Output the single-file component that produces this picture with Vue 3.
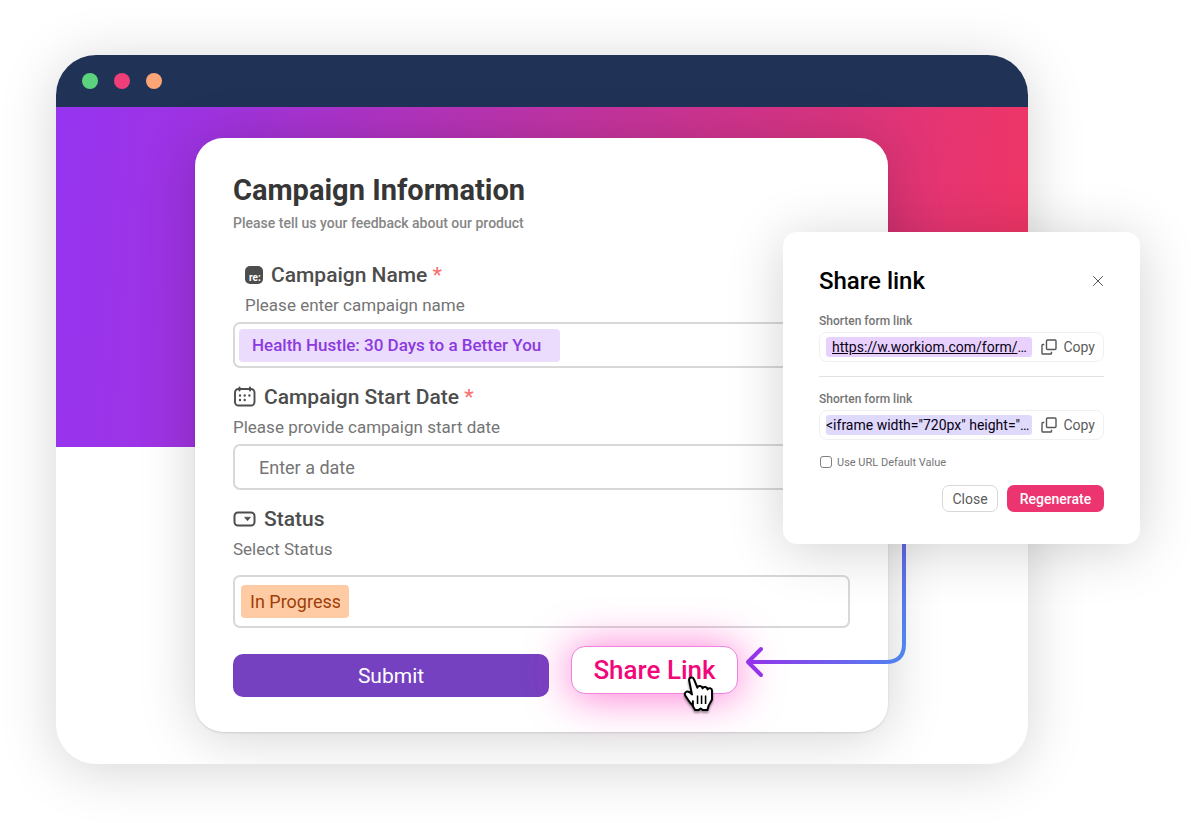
<script setup>
import { ref } from 'vue'

const campaign = ref('Health Hustle: 30 Days to a Better You')
const startDate = ref('')
const status = ref('In Progress')
const embed = ref('<iframe width="720px" height="…')
const useDefault = ref(false)
</script>

<template>
  <main class="stage">
    <section class="window">
      <header class="bar">
        <span class="dot green"></span>
        <span class="dot pink"></span>
        <span class="dot orange"></span>
      </header>
      <div class="canvas">
        <form class="card" @submit.prevent>
          <h1>Campaign Information</h1>
          <p class="intro">Please tell us your feedback about our product</p>

          <div class="field">
            <label class="label inset" for="name">
              <svg class="re-icon" width="18" height="18" viewBox="0 0 18 18" aria-hidden="true">
                <rect width="18" height="18" rx="5" fill="#4d4d4d" />
                <text x="4" y="15" fill="#fff" font-size="10" font-weight="700">re:</text>
              </svg>
              <span>Campaign Name <i>*</i></span>
            </label>
            <p class="hint inset">Please enter campaign name</p>
            <div class="box">
              <input id="name" v-model="campaign" class="chip violet" type="text" />
            </div>
          </div>

          <div class="field">
            <label class="label" for="date">
              <svg width="23" height="22" viewBox="0 0 23 22" fill="none" stroke="#4d4d4d" stroke-width="2" stroke-linecap="round" aria-hidden="true">
                <rect x="2" y="3" width="19.500" height="16.500" rx="3.500" stroke-width="1.900" />
                <path d="M6.500 1.500v3M17 1.500v3" />
                <path d="M7 9.500h.01M11.700 9.500h.01M16.400 9.500h.01M7 14h.01M11.700 14h.01" stroke-width="2.400" />
              </svg>
              <span>Campaign Start Date <i>*</i></span>
            </label>
            <p class="hint">Please provide campaign start date</p>
            <div class="box">
              <input id="date" v-model="startDate" class="plain" type="text" placeholder="Enter a date" />
            </div>
          </div>

          <div class="field">
            <label class="label" for="status">
              <svg width="23" height="16" viewBox="0 0 23 16" aria-hidden="true">
                <rect x="1.500" y="1.500" width="20" height="13" rx="3.500" fill="none" stroke="#4d4d4d" stroke-width="2" />
                <path d="M11.500 6.200h6l-3 3.600z" fill="#4d4d4d" stroke="#4d4d4d" stroke-width=".6" stroke-linejoin="round" />
              </svg>
              <span>Status</span>
            </label>
            <p class="hint">Select Status</p>
            <div class="box tall">
              <select id="status" v-model="status" class="chip peach">
                <option>In Progress</option>
              </select>
            </div>
          </div>

          <div class="actions">
            <button class="submit" type="submit">Submit</button>
            <button class="share" type="button">
              Share Link
              <svg class="hand" width="36" height="39" viewBox="1 0 32 35" aria-hidden="true">
                <path d="M11.500 23.500V28l2 3.500h3l2-1.500 2 1.500h4l1.200-4 3-5.500V14c0-2.300-3.200-3-4-1-.2-2.600-3.700-3-4.500-1-.4-2.500-3.900-2.800-4.700-.6L12.500 4c-.8-2.900-5-2-4.300 1.200L10.700 17.500c-1.200-1.600-2.800-3-4.700-2.600-2 .5-2.100 2.600-1 4.100 2 2.700 3 5.600 6.500 8.500z" fill="#fff" stroke="#000" stroke-width="1.800" stroke-linejoin="round" />
                <path d="M15.700 18.500v7.500M19.300 18.500v7.500M22.900 18.500v7.500" stroke="#000" stroke-width="1.400" fill="none" />
              </svg>
            </button>
          </div>
        </form>
      </div>
    </section>

    <aside class="overlay">
      <svg class="arrow" width="162" height="136" viewBox="0 0 162 136" fill="none" aria-hidden="true">
        <defs>
          <linearGradient id="flow" x1="0" y1="0" x2="1" y2="0">
            <stop offset="0" stop-color="#9333ea" />
            <stop offset="1" stop-color="#4f86f0" />
          </linearGradient>
          <linearGradient id="drop" x1="0" y1="0" x2="0" y2="1">
            <stop offset="0" stop-color="#6068e4" />
            <stop offset="1" stop-color="#4f86f0" />
          </linearGradient>
        </defs>
        <path d="M157 0H161V100Q161 120 141 120H4V116H141Q157 116 157 100V0Z" fill="url(#flow)" />
        <path d="M157 0h4v100h-4z" fill="url(#drop)" />
        <path d="M16 105L3 118L16 131" stroke="#9333ea" stroke-width="4" stroke-linecap="round" stroke-linejoin="round" />
      </svg>
      <section class="dialog" role="dialog" aria-labelledby="share-title">
        <div class="head">
          <h2 id="share-title">Share link</h2>
          <button class="x" type="button" aria-label="Close dialog">
            <svg width="12" height="12" viewBox="0 0 12 12" stroke="#555" stroke-width="1" stroke-linecap="round" aria-hidden="true">
              <path d="M1.500 1.500l9 9M10.500 1.500l-9 9" />
            </svg>
          </button>
        </div>

        <p class="tiny">Shorten form link</p>
        <div class="copy-row">
          <a class="token lilac" href="#form"><u>https://w.workiom.com/form/</u>…</a>
          <button class="copy" type="button">
            <svg width="16" height="16" viewBox="0 0 16 16" fill="none" stroke="#555" stroke-width="1.400" stroke-linejoin="round" aria-hidden="true">
              <rect x="5.500" y="1" width="9.500" height="9.500" rx="1" />
              <path d="M3.300 5.500H1.800q-.8 0-.8.800v7.900q0 .8.800.8h7.900q.8 0 .8-.8v-1.500" />
            </svg>
            Copy
          </button>
        </div>

        <hr />

        <label class="tiny" for="embed">Shorten form link</label>
        <div class="copy-row">
          <input id="embed" class="token blue" type="text" readonly :value="embed" />
          <button class="copy" type="button">
            <svg width="16" height="16" viewBox="0 0 16 16" fill="none" stroke="#555" stroke-width="1.400" stroke-linejoin="round" aria-hidden="true">
              <rect x="5.500" y="1" width="9.500" height="9.500" rx="1" />
              <path d="M3.300 5.500H1.800q-.8 0-.8.800v7.900q0 .8.800.8h7.900q.8 0 .8-.8v-1.500" />
            </svg>
            Copy
          </button>
        </div>

        <label class="check">
          <input v-model="useDefault" type="checkbox" />
          Use URL Default Value
        </label>

        <div class="foot">
          <button class="close" type="button">Close</button>
          <button class="regen" type="button">Regenerate</button>
        </div>
      </section>
    </aside>
  </main>
</template>

<style>
body {
  margin: 0;
  background: #fff;
}
</style>

<style scoped>
* {
  box-sizing: border-box;
}

.stage {
  position: relative;
  padding: 55px 163px 58px 56px;
  font-family: Roboto, "Noto Sans", sans-serif;
  overflow: hidden;
}

h1,
h2,
p {
  margin: 0;
}

button,
input,
select {
  font-family: inherit;
  margin: 0;
}

.window {
  border-radius: 40px;
  overflow: hidden;
  background: #fff;
  box-shadow: 0 6px 56px rgba(0, 0, 0, 0.17);
}

.bar {
  display: flex;
  align-items: center;
  gap: 16px;
  height: 52px;
  padding: 0 26px;
  background: #203256;
}

.dot {
  width: 16px;
  height: 16px;
  border-radius: 50%;
}

.green { background: #5bd37e; }
.pink { background: #ef3e78; }
.orange { background: #fca576; }

.canvas {
  padding: 31px 140px 32px 139px;
  background: linear-gradient(95deg, #9634f0 0%, #9f33e2 15%, #c4349f 54%, #ee3566 98%) no-repeat 0 0 / 100% 340px;
}

.card {
  padding: 36px 38px 35px;
  border-radius: 28px;
  background: #fff;
  box-shadow: 0 1px 2px rgba(0, 0, 0, 0.12), 0 4px 56px rgba(0, 0, 0, 0.18);
}

h1 {
  font-size: 29px;
  line-height: 32px;
  font-weight: 700;
  color: #363636;
}

.intro {
  margin-top: 8px;
  margin-bottom: 31px;
  font-size: 14px;
  line-height: 18px;
  font-weight: 500;
  color: #868686;
}

.field {
  display: flex;
  flex-direction: column;
  margin-bottom: 17px;
}

.label {
  display: flex;
  align-items: center;
  gap: 8px;
  height: 24px;
  font-size: 21px;
  line-height: 24px;
  font-weight: 500;
  color: #4d4d4d;
}

.label i {
  font-style: normal;
  color: #f87171;
}

.inset {
  padding-left: 12px;
}

.hint {
  margin-top: 8px;
  margin-bottom: 6px;
  font-size: 17px;
  line-height: 20px;
  color: #757575;
}

.box {
  display: flex;
  align-items: center;
  height: 46px;
  margin-top: 1px;
  padding: 0 4px;
  border: 2px solid #d8d8d8;
  border-radius: 7px;
}

.box.tall {
  height: 53px;
  margin-top: 10px;
  padding: 0 6px;
}

.chip {
  height: 33px;
  border: 0;
  border-radius: 4px;
  appearance: none;
  outline: none;
}

.violet {
  width: 321px;
  padding: 0 13px;
  background: #ebdbfd;
  color: #8b3add;
  font-size: 17px;
  font-weight: 500;
}

.peach {
  width: 108px;
  padding: 0 9px;
  background: #ffcba4;
  color: #a03e08;
  font-size: 18px;
}

.plain {
  flex: 1;
  min-width: 0;
  height: 36px;
  padding: 0 20px;
  border: 0;
  background: none;
  font-size: 18px;
  outline: none;
}

.plain::placeholder {
  color: #757575;
}

.actions {
  display: flex;
  align-items: flex-end;
  gap: 22px;
  margin-top: 18px;
}

.submit {
  flex: 0 0 316px;
  height: 43px;
  border: 0;
  border-radius: 10px;
  background: #7541c0;
  color: #fff;
  font-size: 21px;
}

.share {
  position: relative;
  width: 167px;
  height: 48px;
  margin-bottom: 3px;
  padding: 0;
  border: 1px solid #ee82dc;
  border-radius: 14px;
  background: #fff;
  color: #f2077b;
  font-size: 26px;
  font-weight: 500;
  box-shadow: 0 2px 44px rgba(255, 20, 180, 0.6);
}

.hand {
  position: absolute;
  right: 20px;
  bottom: -21px;
  filter: drop-shadow(0 2px 1px rgba(0, 0, 0, 0.4));
}

.overlay {
  position: absolute;
  top: 232px;
  right: 51px;
  width: 357px;
}

.arrow {
  position: absolute;
  top: 312px;
  left: -38px;
}

.dialog {
  position: relative;
  padding: 36px 36px 32px;
  border-radius: 14px;
  background: #fff;
  box-shadow: 0 6px 56px rgba(0, 0, 0, 0.18);
}

.head {
  display: flex;
  align-items: center;
  justify-content: space-between;
  height: 26px;
  margin-bottom: 19px;
}

h2 {
  font-size: 24px;
  line-height: 26px;
  font-weight: 500;
  color: #000;
}

.x {
  display: flex;
  padding: 0;
  border: 0;
  background: none;
}

.tiny {
  display: block;
  margin-bottom: 3px;
  font-size: 12px;
  line-height: 16px;
  font-weight: 500;
  color: #757575;
}

.copy-row {
  display: flex;
  align-items: center;
  gap: 9px;
  height: 30px;
  padding: 0 8px 0 6px;
  border: 1px solid #f0f0f0;
  border-radius: 8px;
}

.token {
  flex: 1;
  min-width: 0;
  height: 20px;
  border: 0;
  border-radius: 3px;
  font-size: 14px;
  line-height: 20px;
  color: #0a0014;
  overflow: hidden;
  white-space: nowrap;
  outline: none;
}

.lilac {
  padding: 0 6px;
  background: #e8d2fd;
  text-decoration: none;
}

.blue {
  padding: 0;
  background: #dfdafc;
}

.copy {
  display: flex;
  align-items: center;
  gap: 6px;
  padding: 0;
  border: 0;
  background: none;
  color: #5c5c5c;
  font-size: 14px;
}

hr {
  height: 1px;
  margin: 14px 0;
  border: 0;
  background: #e2e2e2;
}

.check {
  display: flex;
  align-items: center;
  gap: 5px;
  height: 14px;
  margin-top: 15px;
  font-size: 11px;
  color: #757575;
}

.check input {
  width: 12px;
  height: 12px;
  margin-left: 1px;
  border: 1px solid #808080;
  border-radius: 3px;
  appearance: none;
  background: #fff;
}

.check input:checked {
  background: #7541c0;
}

.foot {
  display: flex;
  justify-content: flex-end;
  gap: 9px;
  margin-top: 16px;
}

.close,
.regen {
  height: 27px;
  padding: 0;
  border-radius: 7px;
  font-size: 14px;
}

.close {
  width: 56px;
  border: 1px solid #d8d8d8;
  background: #fff;
  color: #5c5c5c;
}

.regen {
  width: 97px;
  border: 0;
  background: #ec3470;
  color: #fff;
  font-weight: 500;
}
</style>
